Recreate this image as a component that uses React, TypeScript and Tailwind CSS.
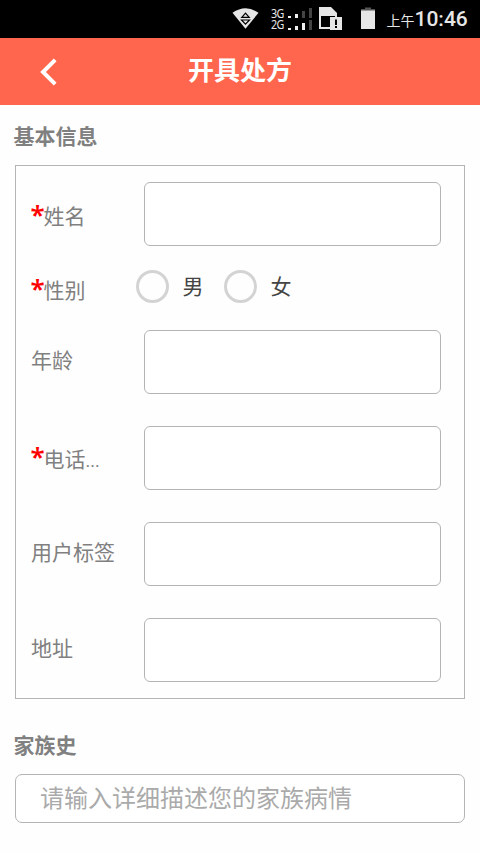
import type { ReactNode } from "react";

function StatusBar() {
  return (
    <div className="flex h-[38px] items-start bg-black pl-[232px] text-[#e6e6e6]">
      <svg className="mt-[7px] h-[23px] w-[27px] shrink-0" viewBox="0 0 27 23">
        <path d="M0.5 5.8Q13.5 -3.4 26.5 5.8L13.5 21.8Z" fill="#e6e6e6" />
        <path d="M13.5 6.2L17.2 10.4H9.8ZM9.5 13H17.5L13.5 17.2Z" fill="#e6e6e6" stroke="#000" strokeWidth="1.2" />
      </svg>
      <div className="ml-[12px] mt-[8px] w-[15px] shrink-0 origin-left scale-x-[0.86] text-[12.5px] leading-[11px] tracking-[-0.8px] font-['Noto_Sans',sans-serif]">
        <div className="h-[11px]">3G</div>
        <div className="h-[11px]">2G</div>
      </div>
      <svg className="ml-[2px] mt-[7px] h-[23px] w-[24px] shrink-0" viewBox="0 0 24 23">
        <g fill="#f0f0f0">
          <rect y="9" width="3" height="2" />
          <rect x="7" y="7" width="3" height="4" />
          <rect y="21" width="3" height="2" />
          <rect x="7" y="19" width="3" height="4" />
          <rect x="14" y="16" width="3" height="7" />
        </g>
        <g fill="#444">
          <rect x="14" y="4" width="3" height="7" />
          <rect x="21" y="1" width="3" height="10" />
          <rect x="21" y="13" width="3" height="10" />
        </g>
      </svg>
      <svg className="ml-[7px] mt-[7px] h-[23px] w-[24px] shrink-0" viewBox="0 0 24 23">
        <path d="M0 0H12L18 6V22H0Z" fill="#e6e6e6" />
        <path d="M2 9H16V20H2Z" fill="#000" />
        <path d="M11 10H23V23H11Z" fill="#e6e6e6" />
        <path d="M16 12.5H18V18H16ZM16 19H18V21H16Z" fill="#000" />
      </svg>
      <svg className="ml-[18px] mt-[7px] h-[22px] w-[14px] shrink-0" viewBox="0 0 14 22">
        <path d="M4 0.5H10V2H14V4H0V2H4Z" fill="#555" />
        <path d="M0 3.5H14V22H0Z" fill="#e6e6e6" />
      </svg>
      <div className="ml-[11.5px] flex items-baseline whitespace-nowrap leading-[38px]">
        <span className="text-[14px] font-['Noto_Sans_CJK_SC',sans-serif]">上午</span>
        <span className="text-[21px] font-medium font-['Roboto',sans-serif]">10:46</span>
      </div>
    </div>
  );
}

function Label({ text, required = false, truncated = false }: { text: string; required?: boolean; truncated?: boolean }) {
  return required ? (
    <div className="mt-[2px] flex w-[112px] shrink-0 items-start pl-[14.5px]">
      <span className="-mt-[2px] h-[30px] w-[13px] text-[26px] font-semibold leading-[30px] text-[#ff0000] font-['Noto_Sans',sans-serif]">*</span>
      <span className={truncated ? "leading-[30px]" : "-mt-[1px] leading-[30px]"}>
        {text}
        {truncated && <span className="text-[18px] font-['Roboto',sans-serif]">...</span>}
      </span>
    </div>
  ) : (
    <div className="-mt-[6px] w-[112px] shrink-0 pl-[15px] leading-[30px]">{text}</div>
  );
}

function Row({ text, required, truncated, children }: { text: string; required?: boolean; truncated?: boolean; children?: ReactNode }) {
  return (
    <div className="flex h-24 items-center">
      <Label text={text} required={required} truncated={truncated} />
      {children ?? <input className="ml-4 h-16 w-[297px] rounded-[6px] border border-[#b4b4b4] bg-white outline-none" />}
    </div>
  );
}

function Radio({ text }: { text: string }) {
  return (
    <label className="flex w-[88px] items-center text-[#444]">
      <span className="h-[33px] w-[33px] rounded-full border-[3px] border-[#d3d3d3]" />
      <span className="-mt-[3px] ml-[13.5px] leading-[30px]">{text}</span>
    </label>
  );
}

export default function App() {
  return (
    <div className="h-[854px] w-[480px] overflow-hidden bg-[#fefefe] text-[21px] text-[#808080] font-['Noto_Sans_CJK_SC',sans-serif]">
      <StatusBar />
      <header className="flex h-[67px] items-center bg-[#ff664d] text-white">
        <svg className="ml-[39px] h-[30px] w-[20px]" viewBox="0 0 20 30" fill="none" stroke="currentColor" strokeWidth="4">
          <path d="M16.2 2.8L4 15L16.2 27.2" />
        </svg>
        <h1 className="-mt-[5px] ml-[129px] text-[26px] font-bold leading-[38px]">开具处方</h1>
      </header>
      <h2 className="ml-[13.5px] mt-[15px] h-[45px] font-bold leading-[30px]">基本信息</h2>
      <section className="mx-[15px] border border-[#b4b4b4]">
        <Row text="姓名" required />
        <div className="flex h-[52px] items-center">
          <Label text="性别" required />
          <div className="ml-2 -mt-[3px] flex">
            <Radio text="男" />
            <Radio text="女" />
          </div>
        </div>
        <Row text="年龄" />
        <Row text="电话" required truncated />
        <Row text="用户标签" />
        <Row text="地址" />
      </section>
      <h2 className="ml-[13.5px] mt-[30px] h-[45px] font-bold leading-[30px]">家族史</h2>
      <input
        className="mx-[15px] block h-[49px] w-[450px] rounded-[7px] border border-[#b4b4b4] bg-white pl-[24px] pb-[5px] text-[24px] outline-none placeholder:text-[#aaa]"
        placeholder="请输入详细描述您的家族病情"
      />
    </div>
  );
}
